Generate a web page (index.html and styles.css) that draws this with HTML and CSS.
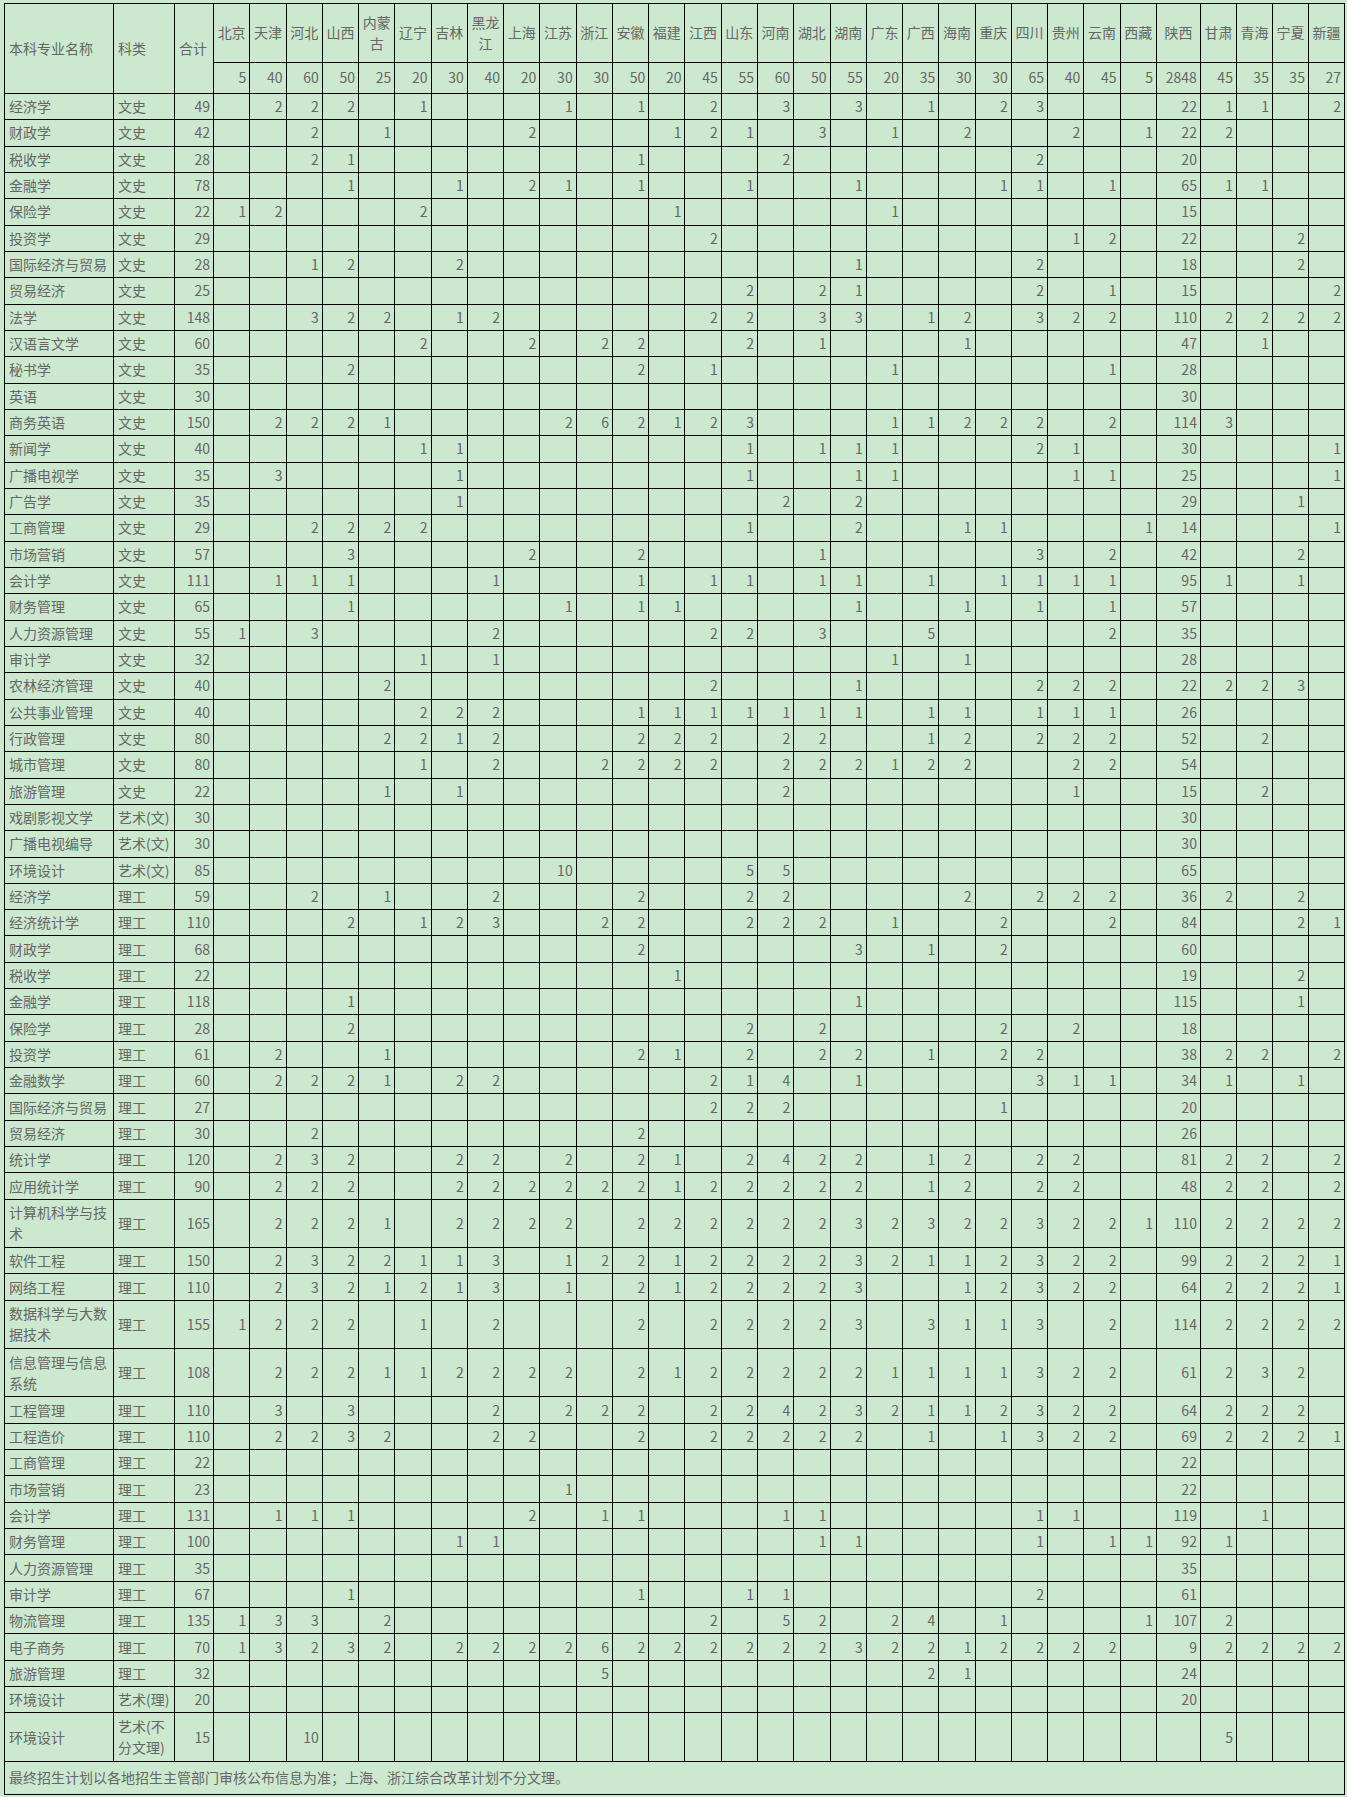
FILE: index.html
```html
<!DOCTYPE html>
<html lang="zh-CN">
<head>
<meta charset="utf-8">
<title>本科专业招生计划</title>
<link rel="stylesheet" href="styles.css">
</head>
<body>
<table class="plan">
<colgroup>
<col class="c-name"><col class="c-kind"><col class="c-total">
<col class="c-p"><col class="c-p"><col class="c-p"><col class="c-p"><col class="c-p"><col class="c-p"><col class="c-p"><col class="c-p"><col class="c-p"><col class="c-p"><col class="c-p"><col class="c-p"><col class="c-p"><col class="c-p"><col class="c-p"><col class="c-p"><col class="c-p"><col class="c-p"><col class="c-p"><col class="c-p"><col class="c-p"><col class="c-p"><col class="c-p"><col class="c-p"><col class="c-p"><col class="c-p">
<col class="c-sx"><col class="c-q"><col class="c-q"><col class="c-q"><col class="c-q">
</colgroup>
<thead>
<tr class="h1">
<th rowspan="2" class="hl">本科专业名称</th><th rowspan="2" class="hl">科类</th><th rowspan="2" class="hl">合计</th>
<th>北京</th><th>天津</th><th>河北</th><th>山西</th><th>内蒙古</th><th>辽宁</th><th>吉林</th><th>黑龙江</th><th>上海</th><th>江苏</th><th>浙江</th><th>安徽</th><th>福建</th><th>江西</th><th>山东</th><th>河南</th><th>湖北</th><th>湖南</th><th>广东</th><th>广西</th><th>海南</th><th>重庆</th><th>四川</th><th>贵州</th><th>云南</th><th>西藏</th><th>陕西</th><th>甘肃</th><th>青海</th><th>宁夏</th><th>新疆</th>
</tr>
<tr class="h2">
<td>5</td><td>40</td><td>60</td><td>50</td><td>25</td><td>20</td><td>30</td><td>40</td><td>20</td><td>30</td><td>30</td><td>50</td><td>20</td><td>45</td><td>55</td><td>60</td><td>50</td><td>55</td><td>20</td><td>35</td><td>30</td><td>30</td><td>65</td><td>40</td><td>45</td><td>5</td><td>2848</td><td>45</td><td>35</td><td>35</td><td>27</td>
</tr>
</thead>
<tbody>
<tr><td class="tx">经济学</td><td class="tx">文史</td><td>49</td><td></td><td>2</td><td>2</td><td>2</td><td></td><td>1</td><td></td><td></td><td></td><td>1</td><td></td><td>1</td><td></td><td>2</td><td></td><td>3</td><td></td><td>3</td><td></td><td>1</td><td></td><td>2</td><td>3</td><td></td><td></td><td></td><td>22</td><td>1</td><td>1</td><td></td><td>2</td></tr>
<tr><td class="tx">财政学</td><td class="tx">文史</td><td>42</td><td></td><td></td><td>2</td><td></td><td>1</td><td></td><td></td><td></td><td>2</td><td></td><td></td><td></td><td>1</td><td>2</td><td>1</td><td></td><td>3</td><td></td><td>1</td><td></td><td>2</td><td></td><td></td><td>2</td><td></td><td>1</td><td>22</td><td>2</td><td></td><td></td><td></td></tr>
<tr><td class="tx">税收学</td><td class="tx">文史</td><td>28</td><td></td><td></td><td>2</td><td>1</td><td></td><td></td><td></td><td></td><td></td><td></td><td></td><td>1</td><td></td><td></td><td></td><td>2</td><td></td><td></td><td></td><td></td><td></td><td></td><td>2</td><td></td><td></td><td></td><td>20</td><td></td><td></td><td></td><td></td></tr>
<tr><td class="tx">金融学</td><td class="tx">文史</td><td>78</td><td></td><td></td><td></td><td>1</td><td></td><td></td><td>1</td><td></td><td>2</td><td>1</td><td></td><td>1</td><td></td><td></td><td>1</td><td></td><td></td><td>1</td><td></td><td></td><td></td><td>1</td><td>1</td><td></td><td>1</td><td></td><td>65</td><td>1</td><td>1</td><td></td><td></td></tr>
<tr><td class="tx">保险学</td><td class="tx">文史</td><td>22</td><td>1</td><td>2</td><td></td><td></td><td></td><td>2</td><td></td><td></td><td></td><td></td><td></td><td></td><td>1</td><td></td><td></td><td></td><td></td><td></td><td>1</td><td></td><td></td><td></td><td></td><td></td><td></td><td></td><td>15</td><td></td><td></td><td></td><td></td></tr>
<tr><td class="tx">投资学</td><td class="tx">文史</td><td>29</td><td></td><td></td><td></td><td></td><td></td><td></td><td></td><td></td><td></td><td></td><td></td><td></td><td></td><td>2</td><td></td><td></td><td></td><td></td><td></td><td></td><td></td><td></td><td></td><td>1</td><td>2</td><td></td><td>22</td><td></td><td></td><td>2</td><td></td></tr>
<tr><td class="tx">国际经济与贸易</td><td class="tx">文史</td><td>28</td><td></td><td></td><td>1</td><td>2</td><td></td><td></td><td>2</td><td></td><td></td><td></td><td></td><td></td><td></td><td></td><td></td><td></td><td></td><td>1</td><td></td><td></td><td></td><td></td><td>2</td><td></td><td></td><td></td><td>18</td><td></td><td></td><td>2</td><td></td></tr>
<tr><td class="tx">贸易经济</td><td class="tx">文史</td><td>25</td><td></td><td></td><td></td><td></td><td></td><td></td><td></td><td></td><td></td><td></td><td></td><td></td><td></td><td></td><td>2</td><td></td><td>2</td><td>1</td><td></td><td></td><td></td><td></td><td>2</td><td></td><td>1</td><td></td><td>15</td><td></td><td></td><td></td><td>2</td></tr>
<tr><td class="tx">法学</td><td class="tx">文史</td><td>148</td><td></td><td></td><td>3</td><td>2</td><td>2</td><td></td><td>1</td><td>2</td><td></td><td></td><td></td><td></td><td></td><td>2</td><td>2</td><td></td><td>3</td><td>3</td><td></td><td>1</td><td>2</td><td></td><td>3</td><td>2</td><td>2</td><td></td><td>110</td><td>2</td><td>2</td><td>2</td><td>2</td></tr>
<tr><td class="tx">汉语言文学</td><td class="tx">文史</td><td>60</td><td></td><td></td><td></td><td></td><td></td><td>2</td><td></td><td></td><td>2</td><td></td><td>2</td><td>2</td><td></td><td></td><td>2</td><td></td><td>1</td><td></td><td></td><td></td><td>1</td><td></td><td></td><td></td><td></td><td></td><td>47</td><td></td><td>1</td><td></td><td></td></tr>
<tr><td class="tx">秘书学</td><td class="tx">文史</td><td>35</td><td></td><td></td><td></td><td>2</td><td></td><td></td><td></td><td></td><td></td><td></td><td></td><td>2</td><td></td><td>1</td><td></td><td></td><td></td><td></td><td>1</td><td></td><td></td><td></td><td></td><td></td><td>1</td><td></td><td>28</td><td></td><td></td><td></td><td></td></tr>
<tr><td class="tx">英语</td><td class="tx">文史</td><td>30</td><td></td><td></td><td></td><td></td><td></td><td></td><td></td><td></td><td></td><td></td><td></td><td></td><td></td><td></td><td></td><td></td><td></td><td></td><td></td><td></td><td></td><td></td><td></td><td></td><td></td><td></td><td>30</td><td></td><td></td><td></td><td></td></tr>
<tr><td class="tx">商务英语</td><td class="tx">文史</td><td>150</td><td></td><td>2</td><td>2</td><td>2</td><td>1</td><td></td><td></td><td></td><td></td><td>2</td><td>6</td><td>2</td><td>1</td><td>2</td><td>3</td><td></td><td></td><td></td><td>1</td><td>1</td><td>2</td><td>2</td><td>2</td><td></td><td>2</td><td></td><td>114</td><td>3</td><td></td><td></td><td></td></tr>
<tr><td class="tx">新闻学</td><td class="tx">文史</td><td>40</td><td></td><td></td><td></td><td></td><td></td><td>1</td><td>1</td><td></td><td></td><td></td><td></td><td></td><td></td><td></td><td>1</td><td></td><td>1</td><td>1</td><td>1</td><td></td><td></td><td></td><td>2</td><td>1</td><td></td><td></td><td>30</td><td></td><td></td><td></td><td>1</td></tr>
<tr><td class="tx">广播电视学</td><td class="tx">文史</td><td>35</td><td></td><td>3</td><td></td><td></td><td></td><td></td><td>1</td><td></td><td></td><td></td><td></td><td></td><td></td><td></td><td>1</td><td></td><td></td><td>1</td><td>1</td><td></td><td></td><td></td><td></td><td>1</td><td>1</td><td></td><td>25</td><td></td><td></td><td></td><td>1</td></tr>
<tr><td class="tx">广告学</td><td class="tx">文史</td><td>35</td><td></td><td></td><td></td><td></td><td></td><td></td><td>1</td><td></td><td></td><td></td><td></td><td></td><td></td><td></td><td></td><td>2</td><td></td><td>2</td><td></td><td></td><td></td><td></td><td></td><td></td><td></td><td></td><td>29</td><td></td><td></td><td>1</td><td></td></tr>
<tr><td class="tx">工商管理</td><td class="tx">文史</td><td>29</td><td></td><td></td><td>2</td><td>2</td><td>2</td><td>2</td><td></td><td></td><td></td><td></td><td></td><td></td><td></td><td></td><td>1</td><td></td><td></td><td>2</td><td></td><td></td><td>1</td><td>1</td><td></td><td></td><td></td><td>1</td><td>14</td><td></td><td></td><td></td><td>1</td></tr>
<tr><td class="tx">市场营销</td><td class="tx">文史</td><td>57</td><td></td><td></td><td></td><td>3</td><td></td><td></td><td></td><td></td><td>2</td><td></td><td></td><td>2</td><td></td><td></td><td></td><td></td><td>1</td><td></td><td></td><td></td><td></td><td></td><td>3</td><td></td><td>2</td><td></td><td>42</td><td></td><td></td><td>2</td><td></td></tr>
<tr><td class="tx">会计学</td><td class="tx">文史</td><td>111</td><td></td><td>1</td><td>1</td><td>1</td><td></td><td></td><td></td><td>1</td><td></td><td></td><td></td><td>1</td><td></td><td>1</td><td>1</td><td></td><td>1</td><td>1</td><td></td><td>1</td><td></td><td>1</td><td>1</td><td>1</td><td>1</td><td></td><td>95</td><td>1</td><td></td><td>1</td><td></td></tr>
<tr><td class="tx">财务管理</td><td class="tx">文史</td><td>65</td><td></td><td></td><td></td><td>1</td><td></td><td></td><td></td><td></td><td></td><td>1</td><td></td><td>1</td><td>1</td><td></td><td></td><td></td><td></td><td>1</td><td></td><td></td><td>1</td><td></td><td>1</td><td></td><td>1</td><td></td><td>57</td><td></td><td></td><td></td><td></td></tr>
<tr><td class="tx">人力资源管理</td><td class="tx">文史</td><td>55</td><td>1</td><td></td><td>3</td><td></td><td></td><td></td><td></td><td>2</td><td></td><td></td><td></td><td></td><td></td><td>2</td><td>2</td><td></td><td>3</td><td></td><td></td><td>5</td><td></td><td></td><td></td><td></td><td>2</td><td></td><td>35</td><td></td><td></td><td></td><td></td></tr>
<tr><td class="tx">审计学</td><td class="tx">文史</td><td>32</td><td></td><td></td><td></td><td></td><td></td><td>1</td><td></td><td>1</td><td></td><td></td><td></td><td></td><td></td><td></td><td></td><td></td><td></td><td></td><td>1</td><td></td><td>1</td><td></td><td></td><td></td><td></td><td></td><td>28</td><td></td><td></td><td></td><td></td></tr>
<tr><td class="tx">农林经济管理</td><td class="tx">文史</td><td>40</td><td></td><td></td><td></td><td></td><td>2</td><td></td><td></td><td></td><td></td><td></td><td></td><td></td><td></td><td>2</td><td></td><td></td><td></td><td>1</td><td></td><td></td><td></td><td></td><td>2</td><td>2</td><td>2</td><td></td><td>22</td><td>2</td><td>2</td><td>3</td><td></td></tr>
<tr><td class="tx">公共事业管理</td><td class="tx">文史</td><td>40</td><td></td><td></td><td></td><td></td><td></td><td>2</td><td>2</td><td>2</td><td></td><td></td><td></td><td>1</td><td>1</td><td>1</td><td>1</td><td>1</td><td>1</td><td>1</td><td></td><td>1</td><td>1</td><td></td><td>1</td><td>1</td><td>1</td><td></td><td>26</td><td></td><td></td><td></td><td></td></tr>
<tr><td class="tx">行政管理</td><td class="tx">文史</td><td>80</td><td></td><td></td><td></td><td></td><td>2</td><td>2</td><td>1</td><td>2</td><td></td><td></td><td></td><td>2</td><td>2</td><td>2</td><td></td><td>2</td><td>2</td><td></td><td></td><td>1</td><td>2</td><td></td><td>2</td><td>2</td><td>2</td><td></td><td>52</td><td></td><td>2</td><td></td><td></td></tr>
<tr><td class="tx">城市管理</td><td class="tx">文史</td><td>80</td><td></td><td></td><td></td><td></td><td></td><td>1</td><td></td><td>2</td><td></td><td></td><td>2</td><td>2</td><td>2</td><td>2</td><td></td><td>2</td><td>2</td><td>2</td><td>1</td><td>2</td><td>2</td><td></td><td></td><td>2</td><td>2</td><td></td><td>54</td><td></td><td></td><td></td><td></td></tr>
<tr><td class="tx">旅游管理</td><td class="tx">文史</td><td>22</td><td></td><td></td><td></td><td></td><td>1</td><td></td><td>1</td><td></td><td></td><td></td><td></td><td></td><td></td><td></td><td></td><td>2</td><td></td><td></td><td></td><td></td><td></td><td></td><td></td><td>1</td><td></td><td></td><td>15</td><td></td><td>2</td><td></td><td></td></tr>
<tr><td class="tx">戏剧影视文学</td><td class="tx">艺术(文)</td><td>30</td><td></td><td></td><td></td><td></td><td></td><td></td><td></td><td></td><td></td><td></td><td></td><td></td><td></td><td></td><td></td><td></td><td></td><td></td><td></td><td></td><td></td><td></td><td></td><td></td><td></td><td></td><td>30</td><td></td><td></td><td></td><td></td></tr>
<tr><td class="tx">广播电视编导</td><td class="tx">艺术(文)</td><td>30</td><td></td><td></td><td></td><td></td><td></td><td></td><td></td><td></td><td></td><td></td><td></td><td></td><td></td><td></td><td></td><td></td><td></td><td></td><td></td><td></td><td></td><td></td><td></td><td></td><td></td><td></td><td>30</td><td></td><td></td><td></td><td></td></tr>
<tr><td class="tx">环境设计</td><td class="tx">艺术(文)</td><td>85</td><td></td><td></td><td></td><td></td><td></td><td></td><td></td><td></td><td></td><td>10</td><td></td><td></td><td></td><td></td><td>5</td><td>5</td><td></td><td></td><td></td><td></td><td></td><td></td><td></td><td></td><td></td><td></td><td>65</td><td></td><td></td><td></td><td></td></tr>
<tr><td class="tx">经济学</td><td class="tx">理工</td><td>59</td><td></td><td></td><td>2</td><td></td><td>1</td><td></td><td></td><td>2</td><td></td><td></td><td></td><td>2</td><td></td><td></td><td>2</td><td>2</td><td></td><td></td><td></td><td></td><td>2</td><td></td><td>2</td><td>2</td><td>2</td><td></td><td>36</td><td>2</td><td></td><td>2</td><td></td></tr>
<tr><td class="tx">经济统计学</td><td class="tx">理工</td><td>110</td><td></td><td></td><td></td><td>2</td><td></td><td>1</td><td>2</td><td>3</td><td></td><td></td><td>2</td><td>2</td><td></td><td></td><td>2</td><td>2</td><td>2</td><td></td><td>1</td><td></td><td></td><td>2</td><td></td><td></td><td>2</td><td></td><td>84</td><td></td><td></td><td>2</td><td>1</td></tr>
<tr><td class="tx">财政学</td><td class="tx">理工</td><td>68</td><td></td><td></td><td></td><td></td><td></td><td></td><td></td><td></td><td></td><td></td><td></td><td>2</td><td></td><td></td><td></td><td></td><td></td><td>3</td><td></td><td>1</td><td></td><td>2</td><td></td><td></td><td></td><td></td><td>60</td><td></td><td></td><td></td><td></td></tr>
<tr><td class="tx">税收学</td><td class="tx">理工</td><td>22</td><td></td><td></td><td></td><td></td><td></td><td></td><td></td><td></td><td></td><td></td><td></td><td></td><td>1</td><td></td><td></td><td></td><td></td><td></td><td></td><td></td><td></td><td></td><td></td><td></td><td></td><td></td><td>19</td><td></td><td></td><td>2</td><td></td></tr>
<tr><td class="tx">金融学</td><td class="tx">理工</td><td>118</td><td></td><td></td><td></td><td>1</td><td></td><td></td><td></td><td></td><td></td><td></td><td></td><td></td><td></td><td></td><td></td><td></td><td></td><td>1</td><td></td><td></td><td></td><td></td><td></td><td></td><td></td><td></td><td>115</td><td></td><td></td><td>1</td><td></td></tr>
<tr><td class="tx">保险学</td><td class="tx">理工</td><td>28</td><td></td><td></td><td></td><td>2</td><td></td><td></td><td></td><td></td><td></td><td></td><td></td><td></td><td></td><td></td><td>2</td><td></td><td>2</td><td></td><td></td><td></td><td></td><td>2</td><td></td><td>2</td><td></td><td></td><td>18</td><td></td><td></td><td></td><td></td></tr>
<tr><td class="tx">投资学</td><td class="tx">理工</td><td>61</td><td></td><td>2</td><td></td><td></td><td>1</td><td></td><td></td><td></td><td></td><td></td><td></td><td>2</td><td>1</td><td></td><td>2</td><td></td><td>2</td><td>2</td><td></td><td>1</td><td></td><td>2</td><td>2</td><td></td><td></td><td></td><td>38</td><td>2</td><td>2</td><td></td><td>2</td></tr>
<tr><td class="tx">金融数学</td><td class="tx">理工</td><td>60</td><td></td><td>2</td><td>2</td><td>2</td><td>1</td><td></td><td>2</td><td>2</td><td></td><td></td><td></td><td></td><td></td><td>2</td><td>1</td><td>4</td><td></td><td>1</td><td></td><td></td><td></td><td></td><td>3</td><td>1</td><td>1</td><td></td><td>34</td><td>1</td><td></td><td>1</td><td></td></tr>
<tr><td class="tx">国际经济与贸易</td><td class="tx">理工</td><td>27</td><td></td><td></td><td></td><td></td><td></td><td></td><td></td><td></td><td></td><td></td><td></td><td></td><td></td><td>2</td><td>2</td><td>2</td><td></td><td></td><td></td><td></td><td></td><td>1</td><td></td><td></td><td></td><td></td><td>20</td><td></td><td></td><td></td><td></td></tr>
<tr><td class="tx">贸易经济</td><td class="tx">理工</td><td>30</td><td></td><td></td><td>2</td><td></td><td></td><td></td><td></td><td></td><td></td><td></td><td></td><td>2</td><td></td><td></td><td></td><td></td><td></td><td></td><td></td><td></td><td></td><td></td><td></td><td></td><td></td><td></td><td>26</td><td></td><td></td><td></td><td></td></tr>
<tr><td class="tx">统计学</td><td class="tx">理工</td><td>120</td><td></td><td>2</td><td>3</td><td>2</td><td></td><td></td><td>2</td><td>2</td><td></td><td>2</td><td></td><td>2</td><td>1</td><td></td><td>2</td><td>4</td><td>2</td><td>2</td><td></td><td>1</td><td>2</td><td></td><td>2</td><td>2</td><td></td><td></td><td>81</td><td>2</td><td>2</td><td></td><td>2</td></tr>
<tr><td class="tx">应用统计学</td><td class="tx">理工</td><td>90</td><td></td><td>2</td><td>2</td><td>2</td><td></td><td></td><td>2</td><td>2</td><td>2</td><td>2</td><td>2</td><td>2</td><td>1</td><td>2</td><td>2</td><td>2</td><td>2</td><td>2</td><td></td><td>1</td><td>2</td><td></td><td>2</td><td>2</td><td></td><td></td><td>48</td><td>2</td><td>2</td><td></td><td>2</td></tr>
<tr class="tall"><td class="tx">计算机科学与技术</td><td class="tx">理工</td><td>165</td><td></td><td>2</td><td>2</td><td>2</td><td>1</td><td></td><td>2</td><td>2</td><td>2</td><td>2</td><td></td><td>2</td><td>2</td><td>2</td><td>2</td><td>2</td><td>2</td><td>3</td><td>2</td><td>3</td><td>2</td><td>2</td><td>3</td><td>2</td><td>2</td><td>1</td><td>110</td><td>2</td><td>2</td><td>2</td><td>2</td></tr>
<tr><td class="tx">软件工程</td><td class="tx">理工</td><td>150</td><td></td><td>2</td><td>3</td><td>2</td><td>2</td><td>1</td><td>1</td><td>3</td><td></td><td>1</td><td>2</td><td>2</td><td>1</td><td>2</td><td>2</td><td>2</td><td>2</td><td>3</td><td>2</td><td>1</td><td>1</td><td>2</td><td>3</td><td>2</td><td>2</td><td></td><td>99</td><td>2</td><td>2</td><td>2</td><td>1</td></tr>
<tr><td class="tx">网络工程</td><td class="tx">理工</td><td>110</td><td></td><td>2</td><td>3</td><td>2</td><td>1</td><td>2</td><td>1</td><td>3</td><td></td><td>1</td><td></td><td>2</td><td>1</td><td>2</td><td>2</td><td>2</td><td>2</td><td>3</td><td></td><td></td><td>1</td><td>2</td><td>3</td><td>2</td><td>2</td><td></td><td>64</td><td>2</td><td>2</td><td>2</td><td>1</td></tr>
<tr class="tall"><td class="tx">数据科学与大数据技术</td><td class="tx">理工</td><td>155</td><td>1</td><td>2</td><td>2</td><td>2</td><td></td><td>1</td><td></td><td>2</td><td></td><td></td><td></td><td>2</td><td></td><td>2</td><td>2</td><td>2</td><td>2</td><td>3</td><td></td><td>3</td><td>1</td><td>1</td><td>3</td><td></td><td>2</td><td></td><td>114</td><td>2</td><td>2</td><td>2</td><td>2</td></tr>
<tr class="tall"><td class="tx">信息管理与信息系统</td><td class="tx">理工</td><td>108</td><td></td><td>2</td><td>2</td><td>2</td><td>1</td><td>1</td><td>2</td><td>2</td><td>2</td><td>2</td><td></td><td>2</td><td>1</td><td>2</td><td>2</td><td>2</td><td>2</td><td>2</td><td>1</td><td>1</td><td>1</td><td>1</td><td>3</td><td>2</td><td>2</td><td></td><td>61</td><td>2</td><td>3</td><td>2</td><td></td></tr>
<tr><td class="tx">工程管理</td><td class="tx">理工</td><td>110</td><td></td><td>3</td><td></td><td>3</td><td></td><td></td><td></td><td>2</td><td></td><td>2</td><td>2</td><td>2</td><td></td><td>2</td><td>2</td><td>4</td><td>2</td><td>3</td><td>2</td><td>1</td><td>1</td><td>2</td><td>3</td><td>2</td><td>2</td><td></td><td>64</td><td>2</td><td>2</td><td>2</td><td></td></tr>
<tr><td class="tx">工程造价</td><td class="tx">理工</td><td>110</td><td></td><td>2</td><td>2</td><td>3</td><td>2</td><td></td><td></td><td>2</td><td>2</td><td></td><td></td><td>2</td><td></td><td>2</td><td>2</td><td>2</td><td>2</td><td>2</td><td></td><td>1</td><td></td><td>1</td><td>3</td><td>2</td><td>2</td><td></td><td>69</td><td>2</td><td>2</td><td>2</td><td>1</td></tr>
<tr><td class="tx">工商管理</td><td class="tx">理工</td><td>22</td><td></td><td></td><td></td><td></td><td></td><td></td><td></td><td></td><td></td><td></td><td></td><td></td><td></td><td></td><td></td><td></td><td></td><td></td><td></td><td></td><td></td><td></td><td></td><td></td><td></td><td></td><td>22</td><td></td><td></td><td></td><td></td></tr>
<tr><td class="tx">市场营销</td><td class="tx">理工</td><td>23</td><td></td><td></td><td></td><td></td><td></td><td></td><td></td><td></td><td></td><td>1</td><td></td><td></td><td></td><td></td><td></td><td></td><td></td><td></td><td></td><td></td><td></td><td></td><td></td><td></td><td></td><td></td><td>22</td><td></td><td></td><td></td><td></td></tr>
<tr><td class="tx">会计学</td><td class="tx">理工</td><td>131</td><td></td><td>1</td><td>1</td><td>1</td><td></td><td></td><td></td><td></td><td>2</td><td></td><td>1</td><td>1</td><td></td><td></td><td></td><td>1</td><td>1</td><td></td><td></td><td></td><td></td><td></td><td>1</td><td>1</td><td></td><td></td><td>119</td><td></td><td>1</td><td></td><td></td></tr>
<tr><td class="tx">财务管理</td><td class="tx">理工</td><td>100</td><td></td><td></td><td></td><td></td><td></td><td></td><td>1</td><td>1</td><td></td><td></td><td></td><td></td><td></td><td></td><td></td><td></td><td>1</td><td>1</td><td></td><td></td><td></td><td></td><td>1</td><td></td><td>1</td><td>1</td><td>92</td><td>1</td><td></td><td></td><td></td></tr>
<tr><td class="tx">人力资源管理</td><td class="tx">理工</td><td>35</td><td></td><td></td><td></td><td></td><td></td><td></td><td></td><td></td><td></td><td></td><td></td><td></td><td></td><td></td><td></td><td></td><td></td><td></td><td></td><td></td><td></td><td></td><td></td><td></td><td></td><td></td><td>35</td><td></td><td></td><td></td><td></td></tr>
<tr><td class="tx">审计学</td><td class="tx">理工</td><td>67</td><td></td><td></td><td></td><td>1</td><td></td><td></td><td></td><td></td><td></td><td></td><td></td><td>1</td><td></td><td></td><td>1</td><td>1</td><td></td><td></td><td></td><td></td><td></td><td></td><td>2</td><td></td><td></td><td></td><td>61</td><td></td><td></td><td></td><td></td></tr>
<tr><td class="tx">物流管理</td><td class="tx">理工</td><td>135</td><td>1</td><td>3</td><td>3</td><td></td><td>2</td><td></td><td></td><td></td><td></td><td></td><td></td><td></td><td></td><td>2</td><td></td><td>5</td><td>2</td><td></td><td>2</td><td>4</td><td></td><td>1</td><td></td><td></td><td></td><td>1</td><td>107</td><td>2</td><td></td><td></td><td></td></tr>
<tr><td class="tx">电子商务</td><td class="tx">理工</td><td>70</td><td>1</td><td>3</td><td>2</td><td>3</td><td>2</td><td></td><td>2</td><td>2</td><td>2</td><td>2</td><td>6</td><td>2</td><td>2</td><td>2</td><td>2</td><td>2</td><td>2</td><td>3</td><td>2</td><td>2</td><td>1</td><td>2</td><td>2</td><td>2</td><td>2</td><td></td><td>9</td><td>2</td><td>2</td><td>2</td><td>2</td></tr>
<tr><td class="tx">旅游管理</td><td class="tx">理工</td><td>32</td><td></td><td></td><td></td><td></td><td></td><td></td><td></td><td></td><td></td><td></td><td>5</td><td></td><td></td><td></td><td></td><td></td><td></td><td></td><td></td><td>2</td><td>1</td><td></td><td></td><td></td><td></td><td></td><td>24</td><td></td><td></td><td></td><td></td></tr>
<tr><td class="tx">环境设计</td><td class="tx">艺术(理)</td><td>20</td><td></td><td></td><td></td><td></td><td></td><td></td><td></td><td></td><td></td><td></td><td></td><td></td><td></td><td></td><td></td><td></td><td></td><td></td><td></td><td></td><td></td><td></td><td></td><td></td><td></td><td></td><td>20</td><td></td><td></td><td></td><td></td></tr>
<tr class="tall"><td class="tx">环境设计</td><td class="tx">艺术(不分文理)</td><td>15</td><td></td><td></td><td>10</td><td></td><td></td><td></td><td></td><td></td><td></td><td></td><td></td><td></td><td></td><td></td><td></td><td></td><td></td><td></td><td></td><td></td><td></td><td></td><td></td><td></td><td></td><td></td><td></td><td>5</td><td></td><td></td><td></td></tr>
<tr class="foot"><td class="tx" colspan="34">最终招生计划以各地招生主管部门审核公布信息为准；上海、浙江综合改革计划不分文理。</td></tr>
</tbody>
</table>
</body>
</html>
```

FILE: styles.css
```css
html {
  background: #cce8cf;
}

body {
  margin: 0;
  padding: 3px 0 0 4px;
  font-family: "Noto Sans CJK SC", "Microsoft YaHei", sans-serif;
  font-size: 14px;
  color: #666;
}

.plan {
  border-collapse: collapse;
  table-layout: fixed;
  width: 1341px;
}

.c-name { width: 109px; }
.c-kind { width: 61px; }
.c-total { width: 39px; }
.c-p { width: 36.27px; }
.c-sx { width: 44px; }
.c-q { width: 36px; }

.plan th,
.plan td {
  border: 1px solid #000;
  line-height: 21px;
  font-weight: normal;
  padding: 2px 3px 2px 4px;
  text-align: right;
  vertical-align: middle;
  overflow: hidden;
}

.plan .h1 {
  height: 58.7px;
}

.plan .h1 th {
  text-align: center;
  padding: 0 2px;
}

.plan .h1 th.hl {
  text-align: left;
  padding-left: 4px;
}

.plan .h2 {
  height: 31.3px;
}

.plan tbody tr {
  height: 26.33px;
}

.plan tbody tr.tall {
  height: 48.33px;
}

.plan td.tx {
  text-align: left;
}

.plan tbody tr.foot {
  height: 33px;
}
```
